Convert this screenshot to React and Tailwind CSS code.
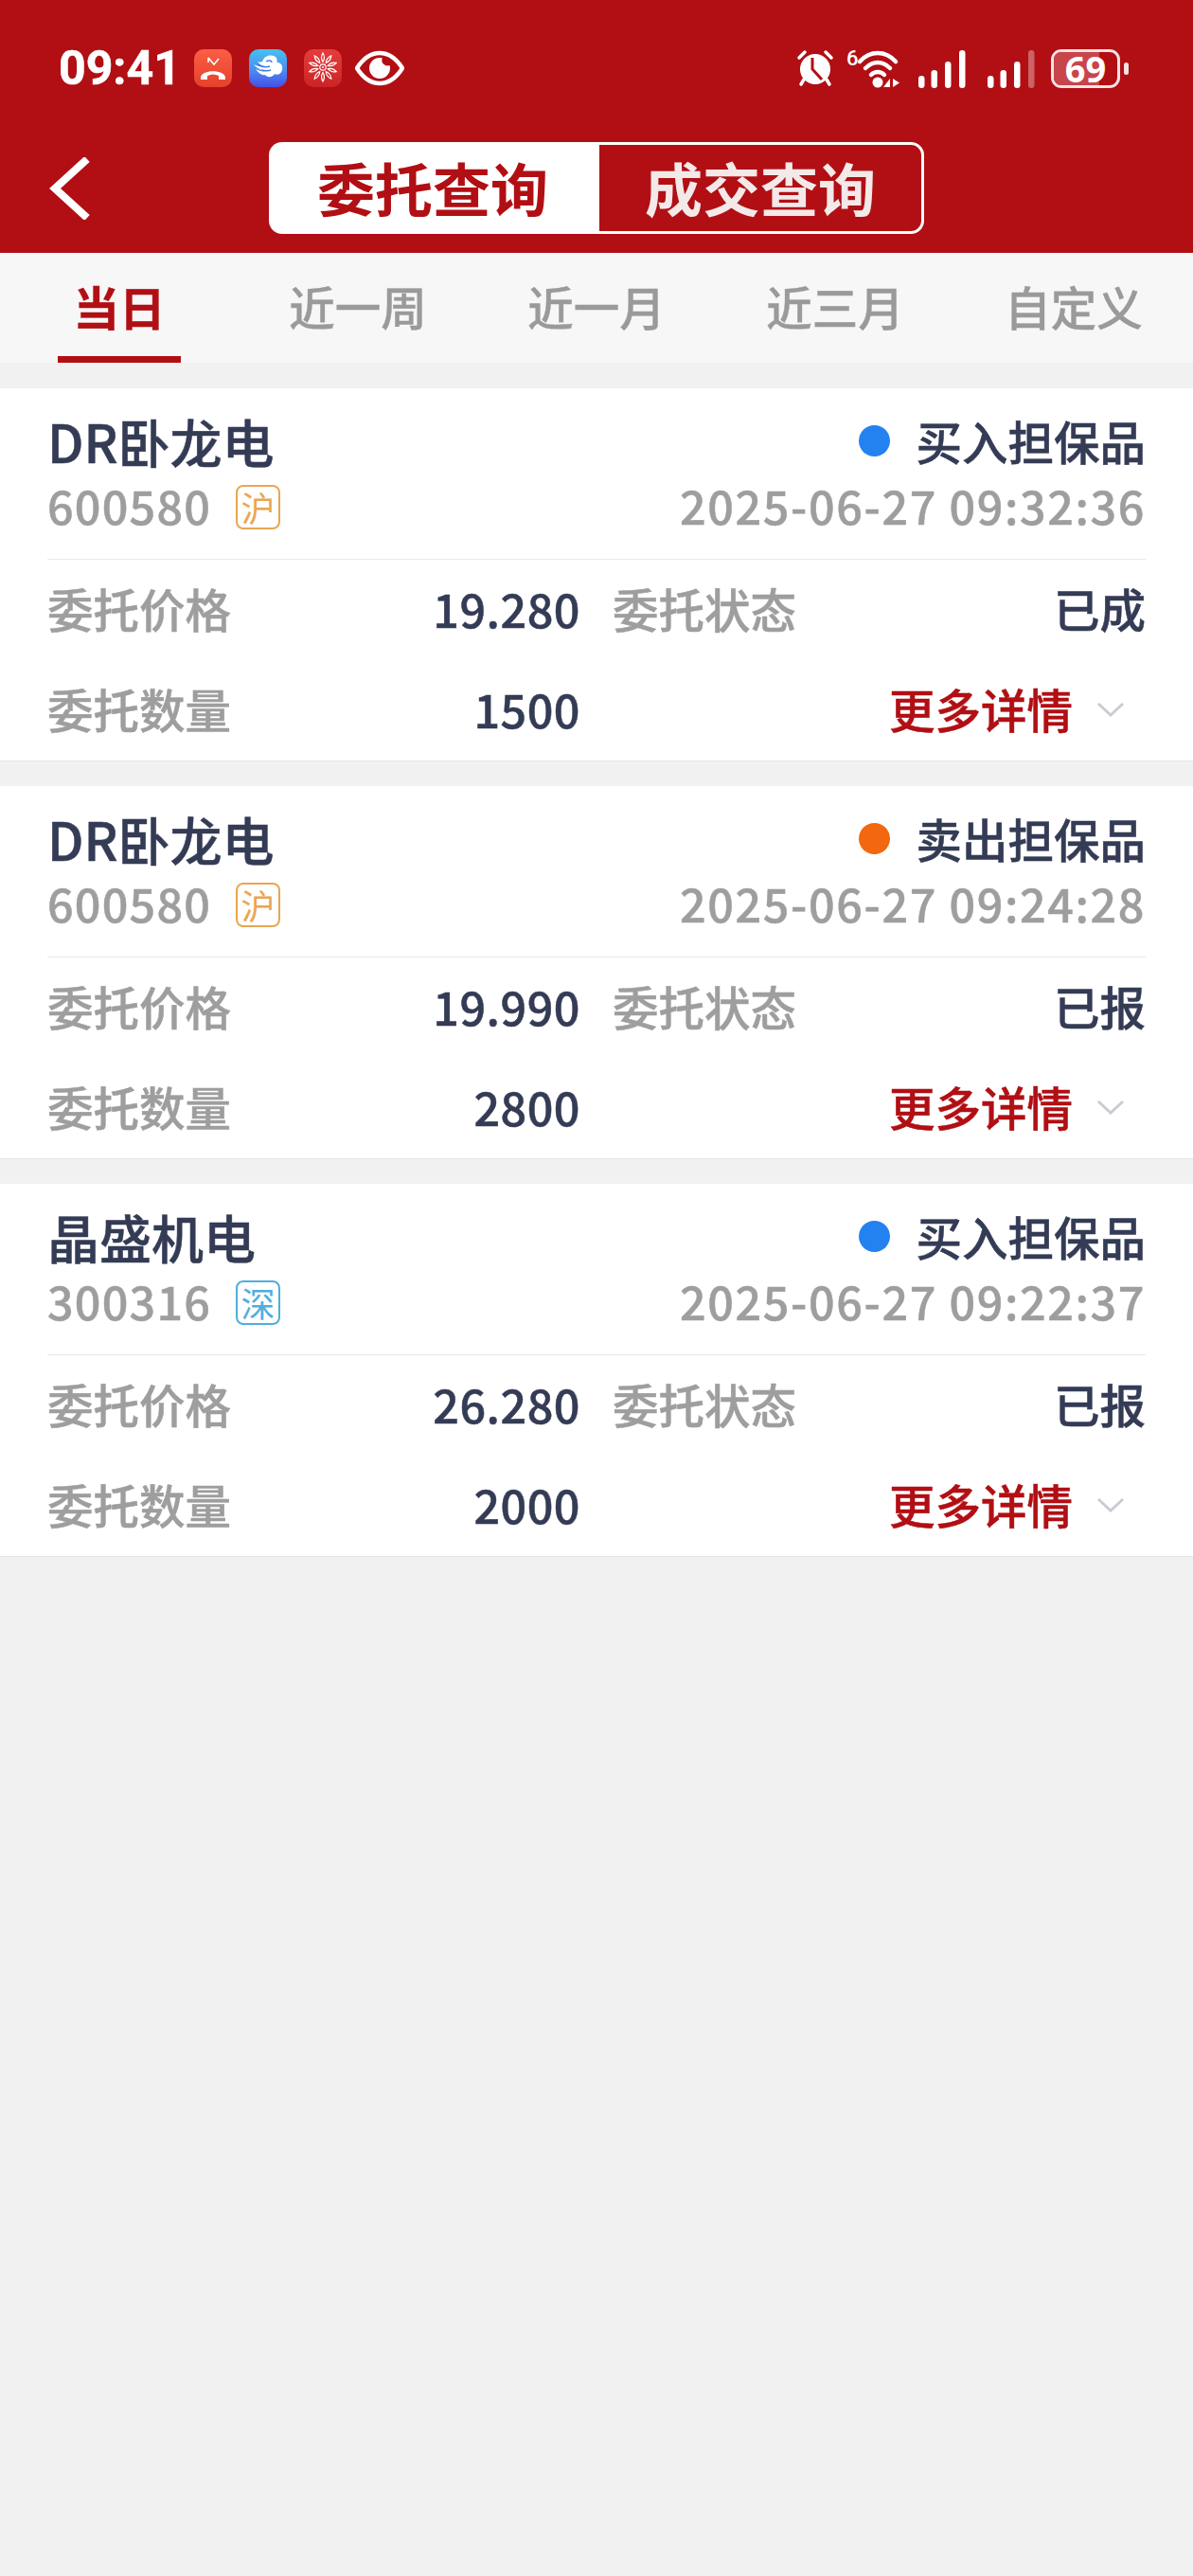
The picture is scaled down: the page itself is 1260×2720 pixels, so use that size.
import React from "react";

const font = "font-['Noto_Sans_CJK_SC','Noto_Sans',sans-serif]";

function MissedCall() {
  return (
    <svg width="40" height="40" viewBox="0 0 40 40">
      <defs>
        <linearGradient id="mc" x1="0" y1="0" x2="0" y2="1">
          <stop offset="0" stopColor="#FB5E45" />
          <stop offset="1" stopColor="#E5402B" />
        </linearGradient>
      </defs>
      <rect width="40" height="40" rx="10" fill="url(#mc)" />
      <path d="M15 9v5h0M15 9l6 7 5-6" fill="none" stroke="#fff" strokeWidth="1.6" />
      <path d="M7 30c0-9 26-9 26 0v2h-7v-4c-4-2-8-2-12 0v4H7z" fill="#fff" />
    </svg>
  );
}

function CloudApp() {
  return (
    <svg width="40" height="40" viewBox="0 0 40 40">
      <defs>
        <linearGradient id="cl" x1="0" y1="0" x2="0" y2="1">
          <stop offset="0" stopColor="#45C2EF" />
          <stop offset="0.55" stopColor="#4C8CF2" />
          <stop offset="1" stopColor="#4650E6" />
        </linearGradient>
      </defs>
      <rect width="40" height="40" rx="10" fill="url(#cl)" />
      <path d="M15 11c2-5 11-6 14-2 1 2 0 4 1 5 4 0 6 4 5 8-1 4-5 6-8 4-2 4-8 4-10 1-3 1-7-2-10-6 4 2 8 3 11 2-4 0-10-3-13-7 4 2 9 3 12 2-3 0-6-2-8-5 3 1 5 1 6-2z" fill="#fff" />
      <path d="M18 13c3-2 6-1 6 1M9 16c5 3 10 3 13 2M13 22c4 1 7 1 10 0" fill="none" stroke="#3E7FE8" strokeWidth="1.5" />
    </svg>
  );
}

function FlowerApp() {
  const petals = [0, 36, 72, 108, 144, 180, 216, 252, 288, 324];
  return (
    <svg width="40" height="40" viewBox="0 0 40 40">
      <defs>
        <linearGradient id="fl" x1="0" y1="0" x2="0" y2="1">
          <stop offset="0" stopColor="#E53C3C" />
          <stop offset="1" stopColor="#CC2426" />
        </linearGradient>
      </defs>
      <rect width="40" height="40" rx="10" fill="url(#fl)" />
      {petals.map((a) => (
        <path key={a} d="M20 13.500C17.800 10 18.500 6.500 20 4c1.500 2.500 2.200 6 0 9.500z" fill="none" stroke="#fff" strokeWidth="1.200" transform={`rotate(${a} 20 19)`} />
      ))}
      <circle cx="20" cy="19" r="3.200" fill="none" stroke="#fff" strokeWidth="1.200" />
      <circle cx="20" cy="19" r="1" fill="#fff" />
    </svg>
  );
}

function Eye() {
  return (
    <svg width="52" height="40" viewBox="0 0 52 40">
      <path d="M2 20C9 9 17 4 26 4s17 5 24 16c-7 11-15 16-24 16S9 31 2 20z" fill="none" stroke="#fff" strokeWidth="4.5" />
      <path d="M26 9a11 11 0 1 0 11 11c0-1-.2-2-.5-3a6 6 0 0 1-7.800-7.600C28 9.100 27 9 26 9z" fill="#fff" />
    </svg>
  );
}

function Alarm() {
  return (
    <svg width="40" height="40" viewBox="0 0 40 40">
      <path d="M3 9l6-6M37 9l-6-6" stroke="#fff" strokeWidth="3.5" strokeLinecap="round" />
      <path d="M8 32l-3 5M32 32l3 5" stroke="#fff" strokeWidth="3.5" strokeLinecap="round" />
      <circle cx="20" cy="21" r="16" fill="#fff" />
      <path d="M17 9v12l10 11" fill="none" stroke="#B10F14" strokeWidth="3" />
    </svg>
  );
}

function Wifi() {
  return (
    <svg width="58" height="42" viewBox="0 0 58 42" className="overflow-visible">
      <text x="0" y="18" fill="#fff" fontSize="22" fontWeight="500" fontFamily="Roboto, sans-serif">6</text>
      <path d="M14 14C25 2 41 2 52 14" fill="none" stroke="#fff" strokeWidth="4.500" strokeLinecap="round" />
      <path d="M20 21c8-8 18-8 26 0" fill="none" stroke="#fff" strokeWidth="4.500" strokeLinecap="round" />
      <path d="M26 28c4-4 10-4 14 0" fill="none" stroke="#fff" strokeWidth="4.500" strokeLinecap="round" />
      <circle cx="33" cy="36" r="5.500" fill="#fff" />
      <path d="M46 32v9h-7zM49 32v9l7-4.500z" fill="#fff" />
    </svg>
  );
}

function Signal({ dim }) {
  const bars = [
    [0, 29, 13],
    [13.5, 23, 19],
    [28, 14, 28],
    [43, 2, 40],
  ];
  return (
    <svg width="50" height="42" viewBox="0 0 50 42">
      {bars.map(([x, y, h], i) => (
        <rect key={i} x={x} y={y} width="6.500" height={h} rx="3.200" fill="#fff" opacity={dim && i === 3 ? 0.35 : 1} />
      ))}
    </svg>
  );
}

function Battery() {
  return (
    <div className="flex items-center">
      <div className="relative flex h-[41px] w-[73px] items-center justify-center rounded-[11px] border-[3px] border-[#F6E4E4]">
        <div className="absolute inset-y-0 left-0 w-[48px] rounded-l-[8px] bg-[#C8454B]" />
        <span className="relative font-['Open_Sans',sans-serif] text-[38px] leading-none font-bold text-white">69</span>
      </div>
      <div className="ml-[4px] h-[13px] w-[5px] rounded-full bg-[#F6E4E4]" />
    </div>
  );
}

function Chevron() {
  return (
    <svg width="30" height="16" viewBox="0 0 30 16">
      <path d="M2 2l13 12L28 2" fill="none" stroke="#C9CCD2" strokeWidth="3" />
    </svg>
  );
}

function Row({ label, value, label2, value2, red }) {
  return (
    <div className="grid h-[106px] grid-cols-2 items-center gap-x-[34px] pb-[3px]">
      <div className="flex items-center justify-between">
        <span className="text-[#9E9E9E]">{label}</span>
        <span className="tracking-[0.5px] text-[#343B55]">{value}</span>
      </div>
      {red ? (
        <div className="flex items-center justify-end">
          <span className="text-[#B10F14]">更多详情</span>
          <span className="mr-[22px] ml-[25px] flex items-center"><Chevron /></span>
        </div>
      ) : (
        <div className="flex items-center justify-between">
          <span className="text-[#9E9E9E]">{label2}</span>
          <span className="text-[#343B55]">{value2}</span>
        </div>
      )}
    </div>
  );
}

function Card({ name, code, market, side, time, price, status, qty }) {
  const sh = market === "沪";
  const sell = side === "卖出担保品";
  return (
    <div className="mb-[26px] border-b border-[#E4E4E4] bg-white px-[50px] text-[48.500px] leading-none font-medium [-webkit-text-stroke:0.5px]">
      <div className="flex h-[181px] flex-col border-b border-[#E8E8E8] pt-[25px]">
        <div className="flex h-[60px] items-center justify-between">
          <span className="text-[55px] text-[#343B55]">{name}</span>
          <span className="flex items-center text-[#343B55]">
            <span className={`mr-[27px] h-[33px] w-[33px] rounded-full ${sell ? "bg-[#F2670F]" : "bg-[#2382F0]"}`} />
            {side}
          </span>
        </div>
        <div className="mt-[8px] flex h-[60px] items-center justify-between text-[#9E9E9E]">
          <span className="flex items-center">
            <span className="tracking-[1.2px]">{code}</span>
            <span className={`mt-[4px] ml-[26px] flex h-[47px] w-[47px] items-center justify-center rounded-[8px] border-2 text-[36px] font-normal [-webkit-text-stroke:0px] ${sh ? "border-[#E9A651] text-[#E9A651]" : "border-[#4FAEDD] text-[#4FAEDD]"}`}>
              {market}
            </span>
          </span>
          <span className="tracking-[1.6px]">{time}</span>
        </div>
      </div>
      <Row label="委托价格" value={price} label2="委托状态" value2={status} />
      <Row label="委托数量" value={qty} red />
    </div>
  );
}

const tabs = ["当日", "近一周", "近一月", "近三月", "自定义"];

const orders = [
  { name: "DR卧龙电", code: "600580", market: "沪", side: "买入担保品", time: "2025-06-27 09:32:36", price: "19.280", status: "已成", qty: "1500" },
  { name: "DR卧龙电", code: "600580", market: "沪", side: "卖出担保品", time: "2025-06-27 09:24:28", price: "19.990", status: "已报", qty: "2800" },
  { name: "晶盛机电", code: "300316", market: "深", side: "买入担保品", time: "2025-06-27 09:22:37", price: "26.280", status: "已报", qty: "2000" },
];

export default function App() {
  return (
    <div className={`min-h-[2720px] w-[1260px] bg-[#F1F1F1] ${font}`}>
      <header className="bg-[#B10F14] pt-[50px] pb-[20px]">
        <div className="flex h-[44px] items-center justify-between pr-[68px] pl-[62px]">
          <div className="flex items-center">
            <span className="w-[143px] font-['Roboto',sans-serif] text-[50px] leading-none font-bold text-white [-webkit-text-stroke:0.6px]">09:41</span>
            <span className="flex"><MissedCall /></span>
            <span className="ml-[18px] flex"><CloudApp /></span>
            <span className="ml-[18px] flex"><FlowerApp /></span>
            <span className="ml-[14px] flex"><Eye /></span>
          </div>
          <div className="flex items-center">
            <Alarm />
            <span className="ml-[13px] flex"><Wifi /></span>
            <span className="ml-[18px] flex"><Signal /></span>
            <span className="ml-[23px] flex"><Signal dim /></span>
            <span className="ml-[17px] flex"><Battery /></span>
          </div>
        </div>
        <div className="mt-[56px] flex h-[97px] items-center pl-[52px]">
          <svg width="44" height="66" viewBox="0 0 44 66" className="shrink-0">
            <path d="M40 2L6 33l34 31" fill="none" stroke="#fff" strokeWidth="8" />
          </svg>
          <div className="ml-[188px] flex h-[97px] w-[692px] text-[61px] leading-none font-bold">
            <div className="flex w-[346px] items-center justify-center rounded-l-[14px] bg-white pb-[2px] text-[#B10F14]">委托查询</div>
            <div className="flex flex-1 items-center justify-center rounded-r-[14px] border-[3px] border-white pb-[2px] text-[#F3E9E9]">成交查询</div>
          </div>
        </div>
      </header>

      <nav className="grid h-[116px] grid-cols-5 bg-[#F7F7F7] text-[48.500px] leading-none font-medium [-webkit-text-stroke:0.4px]">
        {tabs.map((t, i) => (
          <div key={t} className={`relative flex items-center justify-center pb-[3px] ${i === 0 ? "font-bold text-[#B10F14]" : "text-[#9A9A9A]"}`}>
            {t}
            {i === 0 && <span className="absolute bottom-0 left-[61px] h-[7px] w-[130px] bg-[#B10F14]" />}
          </div>
        ))}
      </nav>

      <main className="pt-[27px]">
        {orders.map((o) => (
          <Card key={o.time} {...o} />
        ))}
      </main>
    </div>
  );
}
